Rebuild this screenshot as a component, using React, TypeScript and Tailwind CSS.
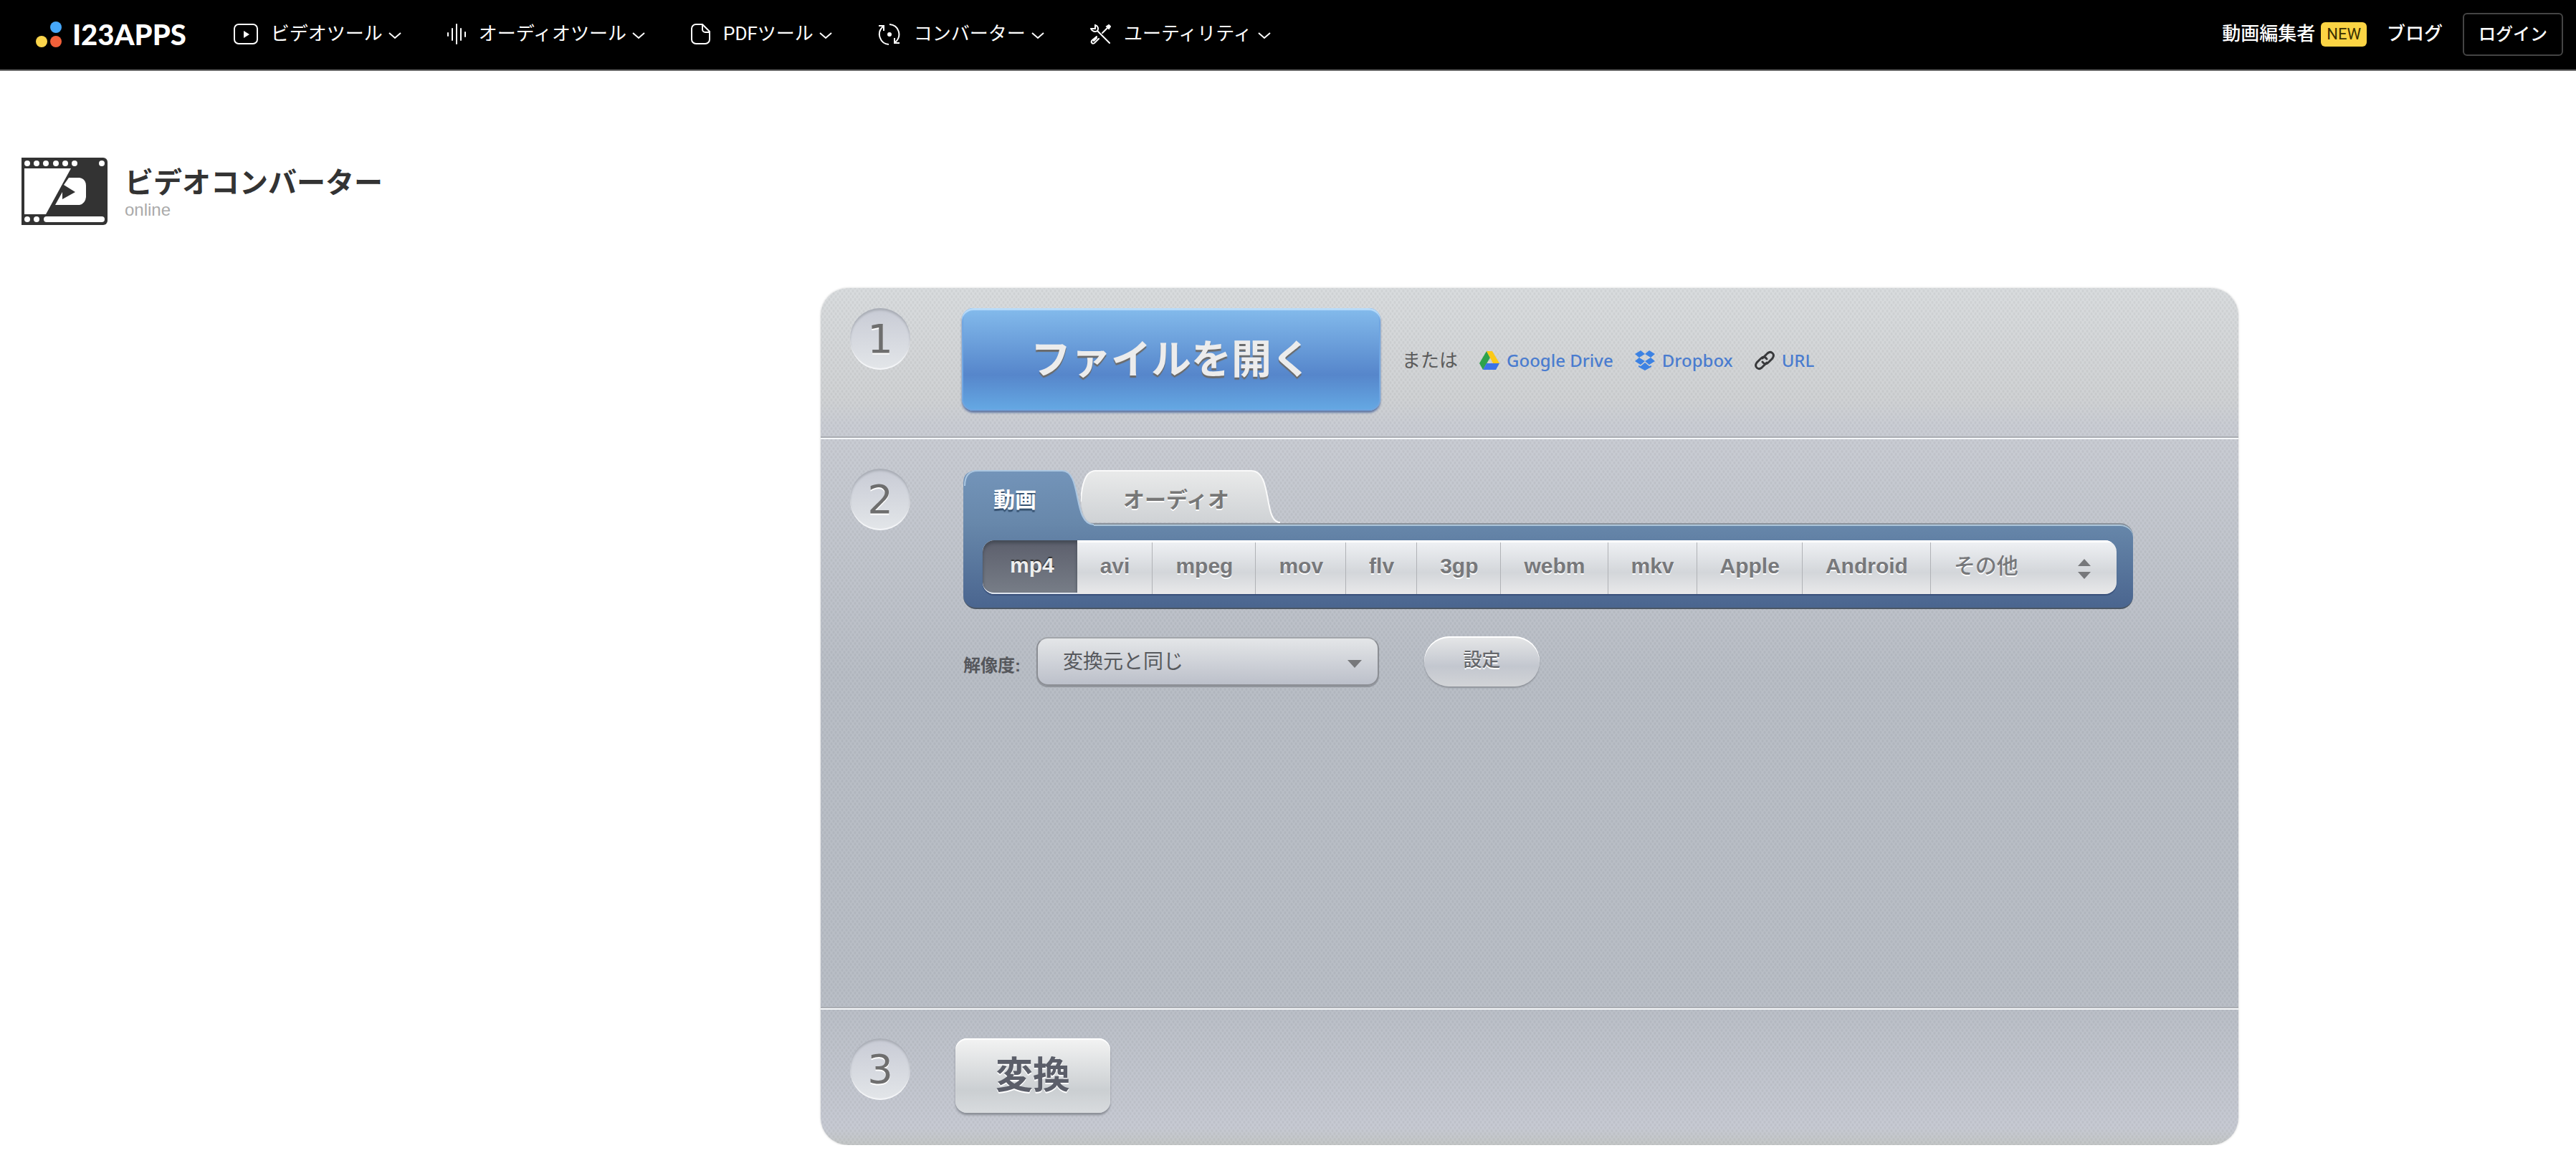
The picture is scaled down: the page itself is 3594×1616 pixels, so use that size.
import { useState } from "react";
import type { ReactNode } from "react";
import clsx from "clsx";

const navItems = [
  { label: "ビデオツール", icon: <VideoIcon /> },
  { label: "オーディオツール", icon: <AudioIcon /> },
  { label: "PDFツール", icon: <PdfIcon /> },
  { label: "コンバーター", icon: <ConvertIcon /> },
  { label: "ユーティリティ", icon: <ToolsIcon /> },
];

const formats = ["mp4", "avi", "mpeg", "mov", "flv", "3gp", "webm", "mkv", "Apple", "Android"];

function VideoIcon() {
  return (
    <svg viewBox="0 0 34 30" className="w-[34px] h-[30px]" fill="none" stroke="white" strokeWidth="2">
      <rect x="1" y="1" width="32" height="27" rx="6" />
      <path d="M14 10l8 5-8 5z" fill="white" stroke="none" />
    </svg>
  );
}

function AudioIcon() {
  return (
    <svg viewBox="0 0 26 30" className="w-[26px] h-[30px]" stroke="white" strokeWidth="2" strokeLinecap="round">
      <path d="M1 13v4M7 7v16M13 1v27M19 7v16M25 12v6" />
    </svg>
  );
}

function PdfIcon() {
  return (
    <svg viewBox="0 0 27 30" className="w-[27px] h-[30px]" fill="none" stroke="white" strokeWidth="2" strokeLinejoin="round">
      <path d="M16 1H7a6 6 0 0 0-6 6v15a6 6 0 0 0 6 6h13a6 6 0 0 0 6-6V11z" />
      <path d="M16 1v7a4 4 0 0 0 4 4h6" />
    </svg>
  );
}

function ConvertIcon() {
  return (
    <svg viewBox="0 0 32 32" className="w-8 h-8" fill="none" stroke="white" strokeWidth="2">
      <path d="M15 30C3 29-3 14 7 5M1 4h7v7" />
      <path d="M16 2c13 1 18 16 8 25M30 28h-7v-7" />
      <circle cx="16" cy="16" r="3" fill="white" stroke="none" />
    </svg>
  );
}

function ToolsIcon() {
  return (
    <svg viewBox="0 0 29 28" className="w-[29px] h-7" fill="none" stroke="white" strokeWidth="2" strokeLinecap="round">
      <path d="M10 9l17 17M1 6c2 4 6 5 9 3 2-3 1-7-3-8v5H1" />
      <path d="M17 12l8-8" />
      <path d="M23 3l3-2 2 2-2 3z" fill="white" />
      <path d="M9 17l-6 5c-3 3 0 6 3 4l6-6M5 23l4-4" />
    </svg>
  );
}

function Logo() {
  return (
    <a href="#" className="flex items-center gap-[14px]">
      <svg viewBox="0 0 38 38" className="w-[38px] h-[38px]">
        <circle cx="29" cy="9" r="8" fill="#46a8fb" />
        <circle cx="9" cy="29" r="8" fill="#fbd54b" />
        <circle cx="29" cy="29" r="8" fill="#f1603a" />
      </svg>
      <span className="font-[Lato,sans-serif] text-[40px] leading-10 font-black text-white">I23APPS</span>
    </a>
  );
}

function FilmIcon() {
  return (
    <svg viewBox="0 0 120 94" className="w-[120px] h-[94px]">
      <path d="M0 0h114a6 6 0 0 1 6 6v82a6 6 0 0 1-6 6H0z" fill="#333" />
      <g fill="white">
        {[8, 21, 34, 48, 61, 74, 112].map((x) => (
          <circle key={x} cx={x} cy="8" r="4" />
        ))}
        <circle cx="8" cy="86" r="4" />
        <circle cx="21" cy="86" r="4" />
        <rect x="31" y="82" width="85" height="8" rx="4" />
        <path d="M4 15h65L34 79H4z" />
        <path d="M66 28h15q9 2 9 11v16q-1 9-9 11H47l10-18v10l18-10-16-10z" />
      </g>
    </svg>
  );
}

function DriveIcon() {
  return (
    <svg viewBox="0 0 28 26" className="w-7 h-[26px]">
      <path d="M10 0L0 17l5 9 10-17z" fill="#2da24c" />
      <path d="M10 0h8l10 17h-9z" fill="#fbc918" />
      <path d="M10 17h18l-5 9H5z" fill="#3b72e8" />
    </svg>
  );
}

function DropboxIcon() {
  return (
    <svg viewBox="0 0 28 28" className="w-7 h-7" fill="#3c82e3">
      <path d="M8 0L0 5l6 5 8-5zM20 0l8 5-6 5-8-5zM0 15l8 5 6-5-8-5zM28 15l-8 5-6-5 8-5z" />
      <path d="M14 17l-6 5-3-1v2l9 5 9-5v-2l-3 1z" />
    </svg>
  );
}

function LinkIcon() {
  return (
    <svg viewBox="0 0 28 28" className="w-7 h-7" fill="none" stroke="#38393b" strokeWidth="3" strokeLinecap="round">
      <path d="M11 11l7-7c5-4 11 1 7 7l-6 6c-3 3-6 2-8-1" />
      <path d="M17 17l-7 7c-5 4-11-1-7-7l6-6c3-3 6-2 8 1" />
    </svg>
  );
}

function Header() {
  return (
    <header className="flex items-center justify-between h-[99px] bg-black border-b-2 border-[#6b6b6b] pl-[49px] pr-[18px] pb-[2px] text-[26px] text-white">
      <div className="flex items-center gap-[66px]">
        <Logo />
        <nav className="flex items-center gap-16">
          {navItems.map((item) => (
            <button key={item.label} type="button" className="flex items-center gap-[18px]">
              {item.icon}
              <span className="flex items-center gap-2">
                {item.label}
                <svg viewBox="0 0 18 10" className="w-[18px] h-[10px] mt-1" fill="none" stroke="white" strokeWidth="2">
                  <path d="M1 1l8 7 8-7" />
                </svg>
              </span>
            </button>
          ))}
        </nav>
      </div>
      <div className="flex items-center gap-7 font-medium">
        <a href="#" className="flex items-center gap-2">
          動画編集者
          <span className="rounded-md bg-[#fbd444] px-2 text-[22px] leading-[34px] font-normal text-[#3a2f00]">NEW</span>
        </a>
        <a href="#">ブログ</a>
        <button type="button" className="h-[60px] rounded-md border-2 border-[#444] px-5 text-2xl font-medium">
          ログイン
        </button>
      </div>
    </header>
  );
}

function Step({ n, className, children }: { n: number; className?: string; children: ReactNode }) {
  return (
    <section className={clsx("flex items-start pl-[41px]", className)}>
      <div className="flex items-center justify-center w-[84px] h-[86px] shrink-0 rounded-full bg-linear-to-b from-[#c8cbd5] to-[#e3e6e9] shadow-[inset_0_3px_3px_#a9adb5,inset_0_-2px_1px_#f5f6f8] font-['DejaVu_Sans',sans-serif] text-[56px] text-[#6e6e6e] text-shadow-[0_2px_0_#fff]">
        {n}
      </div>
      {children}
    </section>
  );
}

function FormatTabs() {
  const [tab, setTab] = useState("video");
  const [format, setFormat] = useState("mp4");

  return (
    <div className="w-[1632px]">
      <div role="tablist" className="flex h-[74px] text-[30px] font-bold">
        <button
          type="button"
          role="tab"
          aria-selected={tab === "video"}
          onClick={() => setTab("video")}
          className="relative w-[164px] pr-5 pt-2 text-white text-shadow-[0_3px_1px_#34506f]"
        >
          <svg viewBox="0 0 182 78" className="absolute left-0 top-0 z-10 w-[182px] max-w-none h-[78px]">
            <defs>
              <linearGradient id="videoTab" x1="0" y1="0" x2="0" y2="1">
                <stop offset="0" stopColor="#7394b9" />
                <stop offset="1" stopColor="#6787aa" />
              </linearGradient>
            </defs>
            <path d="M0 78V18Q0 1 18 1H138C166 1 152 76 182 76V78z" fill="url(#videoTab)" />
            <path d="M2 22Q2 1 20 1H138C166 1 152 76 182 76" fill="none" stroke="#abc6e0" strokeWidth="2" />
          </svg>
          <span className="relative z-10">動画</span>
        </button>
        <button
          type="button"
          role="tab"
          aria-selected={tab === "audio"}
          onClick={() => setTab("audio")}
          className="relative w-[278px] pr-3 pt-2 text-[#777] text-shadow-[0_2px_0_#fff]"
        >
          <svg viewBox="0 0 278 74" className="absolute inset-0 w-[278px] h-[74px]">
            <defs>
              <linearGradient id="audioTab" x1="0" y1="0" x2="0" y2="1">
                <stop offset="0" stopColor="#e9eaea" />
                <stop offset="1" stopColor="#cfd2d5" />
              </linearGradient>
            </defs>
            <path d="M0 44Q2 1 20 1H238C268 1 254 73 278 73H14Q3 70 0 44z" fill="url(#audioTab)" />
            <path d="M0 44Q2 1 20 1H238C268 1 254 73 278 73" fill="none" stroke="#fafafa" strokeWidth="2" />
          </svg>
          <span className="relative">オーディオ</span>
        </button>
      </div>
      <div className="rounded-[18px] rounded-tl-none border-t-2 border-b-2 border-t-[#8b939c] border-b-[#4b5664] bg-linear-to-b from-[#6787aa] to-[#4a658f] shadow-[inset_0_2px_0_#abc4d8] pl-[27px] pr-[23px] pt-[22px] pb-[19px]">
        <div className="flex h-[75px] overflow-hidden rounded-2xl bg-linear-to-b from-[#f0f2f5] via-[#d3d6da] via-60% to-[#e9e9ea] shadow-[0_2px_1px_#39507a] font-bold text-[30px] text-[#77787b]">
          {formats.map((f) => (
            <button
              key={f}
              type="button"
              aria-pressed={format === f}
              onClick={() => setFormat(f)}
              className={clsx(
                "px-8 first:pl-[38px] pb-1",
                format === f
                  ? "rounded-l-2xl border-b-2 border-[#dfe6ef] bg-linear-to-b from-[#5c5f6c] to-[#777d87] shadow-[inset_0_4px_4px_#454b56] text-[#eee] text-shadow-[0_-2px_1px_#333]"
                  : "shadow-[inset_0_3px_0_#fff,inset_-1px_0_0_#b0b2b6] text-shadow-[0_2px_0_#fff]",
              )}
            >
              {f}
            </button>
          ))}
          <button
            type="button"
            className="flex flex-1 items-center justify-between pl-8 pr-[35px] pb-1 shadow-[inset_0_3px_0_#fff] font-medium text-shadow-[0_2px_0_#fff]"
          >
            その他
            <svg viewBox="0 0 20 30" className="w-5 h-[30px] mt-2" fill="#77787b">
              <path d="M10 1l9 10H1zM1 19h18L10 29z" />
            </svg>
          </button>
        </div>
      </div>
    </div>
  );
}

function Resolution() {
  return (
    <div className="flex items-center">
      <label htmlFor="resolution" className="w-[102px] pt-3 text-2xl font-bold text-[#55575c]">
        解像度:
      </label>
      <div className="relative">
        <select
          id="resolution"
          className="w-[478px] h-[68px] appearance-none rounded-2xl border-2 border-[#8b8e94] border-t-[#a2a5aa] bg-linear-to-b from-[#e4e6e8] to-[#bcc0ca] shadow-[0_2px_1px_#8f939a] px-[35px] pt-[2px] text-[28px] text-[#57595d]"
        >
          <option>変換元と同じ</option>
        </select>
        <svg viewBox="0 0 20 12" className="pointer-events-none absolute right-6 top-8 w-5 h-3" fill="#77787b">
          <path d="M0 0h20L10 11z" />
        </svg>
      </div>
      <button
        type="button"
        className="ml-[63px] w-[161px] h-[70px] rounded-full bg-linear-to-b from-[#e6e7e8] via-[#c3c7cf] via-60% to-[#d2d4d7] shadow-[inset_0_2px_0_#fff,0_2px_2px_#8f939a] pb-1 text-[26px] font-medium text-[#66686c] text-shadow-[0_2px_0_#fff]"
      >
        設定
      </button>
    </div>
  );
}

function SourceLink({ icon, children }: { icon: ReactNode; children: ReactNode }) {
  return (
    <a href="#" className="flex items-center gap-[10px] font-medium text-[#4a7ccf]">
      {icon}
      {children}
    </a>
  );
}

export default function App() {
  return (
    <div className="font-[Roboto,'Noto_Sans_CJK_JP',sans-serif] bg-white">
      <Header />
      <main>
        <div className="flex gap-6 pl-[30px] pt-[121px]">
          <FilmIcon />
          <div className="pt-[14px]">
            <h1 className="text-[40px] leading-[44px] font-bold text-[#333]">ビデオコンバーター</h1>
            <p className="font-['Liberation_Sans',sans-serif] text-2xl leading-[30px] text-[#aaa]">online</p>
          </div>
        </div>

        <div className="grid grid-cols-[1145fr_1978fr_471fr] mt-[88px] font-['Liberation_Sans','Noto_Sans_CJK_JP',sans-serif]">
          <div className="col-start-2 rounded-[38px] bg-[radial-gradient(#0000000c_1px,transparent_2px),radial-gradient(#0000000c_1px,transparent_2px),linear-gradient(#d9dcde,#d0d2d4_13%,#cacdd4_16%,#b9bec6_45%,#b9bec6_82%,#c7cad3_98%,#c4c7c7)] bg-size-[6px_8px,6px_8px,100%_100%] bg-position-[0_0,3px_4px,0_0] shadow-[0_0_3px_#ccc]">
            <Step n={1} className="h-[209px] pt-7">
              <button
                type="button"
                className="ml-[72px] w-[584px] h-[143px] rounded-2xl bg-linear-to-b from-[#84bbec] via-[#5686cb] via-65% to-[#65a9e4] shadow-[inset_0_3px_1px_#b9dcfa,inset_0_0_0_2px_#6ea4e0,0_3px_3px_#6279a5] text-[56px] font-bold text-[#ececec] text-shadow-[0_3px_1px_#6b6b6b]"
              >
                ファイルを開く
              </button>
              <div className="flex items-center gap-[30px] ml-[30px] h-[145px] font-['Noto_Sans','Noto_Sans_CJK_JP',sans-serif] text-2xl">
                <span className="text-[26px] text-[#5b5b5b]">または</span>
                <SourceLink icon={<DriveIcon />}>Google Drive</SourceLink>
                <SourceLink icon={<DropboxIcon />}>Dropbox</SourceLink>
                <SourceLink icon={<LinkIcon />}>URL</SourceLink>
              </div>
            </Step>

            <Step n={2} className="h-[796px] border-t-2 border-[#f4f6f8] shadow-[0_-2px_0_#aaadb3] pt-[41px]">
              <div className="flex flex-col gap-[38px] ml-[74px] pt-[2px]">
                <FormatTabs />
                <Resolution />
              </div>
            </Step>

            <Step n={3} className="h-[191px] border-t-2 border-[#f4f6f8] shadow-[0_-2px_0_#aaadb3] pt-10">
              <button
                type="button"
                className="ml-[63px] w-[216px] h-[104px] rounded-2xl bg-linear-to-b from-[#f3f3f3] via-[#cbcfd2] via-70% to-[#d8dbde] shadow-[inset_0_2px_1px_#fff,0_3px_3px_#8a8e96] text-[52px] font-bold text-[#5b5e69] text-shadow-[0_2px_0_#fff]"
              >
                変換
              </button>
            </Step>
          </div>
        </div>
      </main>
    </div>
  );
}
